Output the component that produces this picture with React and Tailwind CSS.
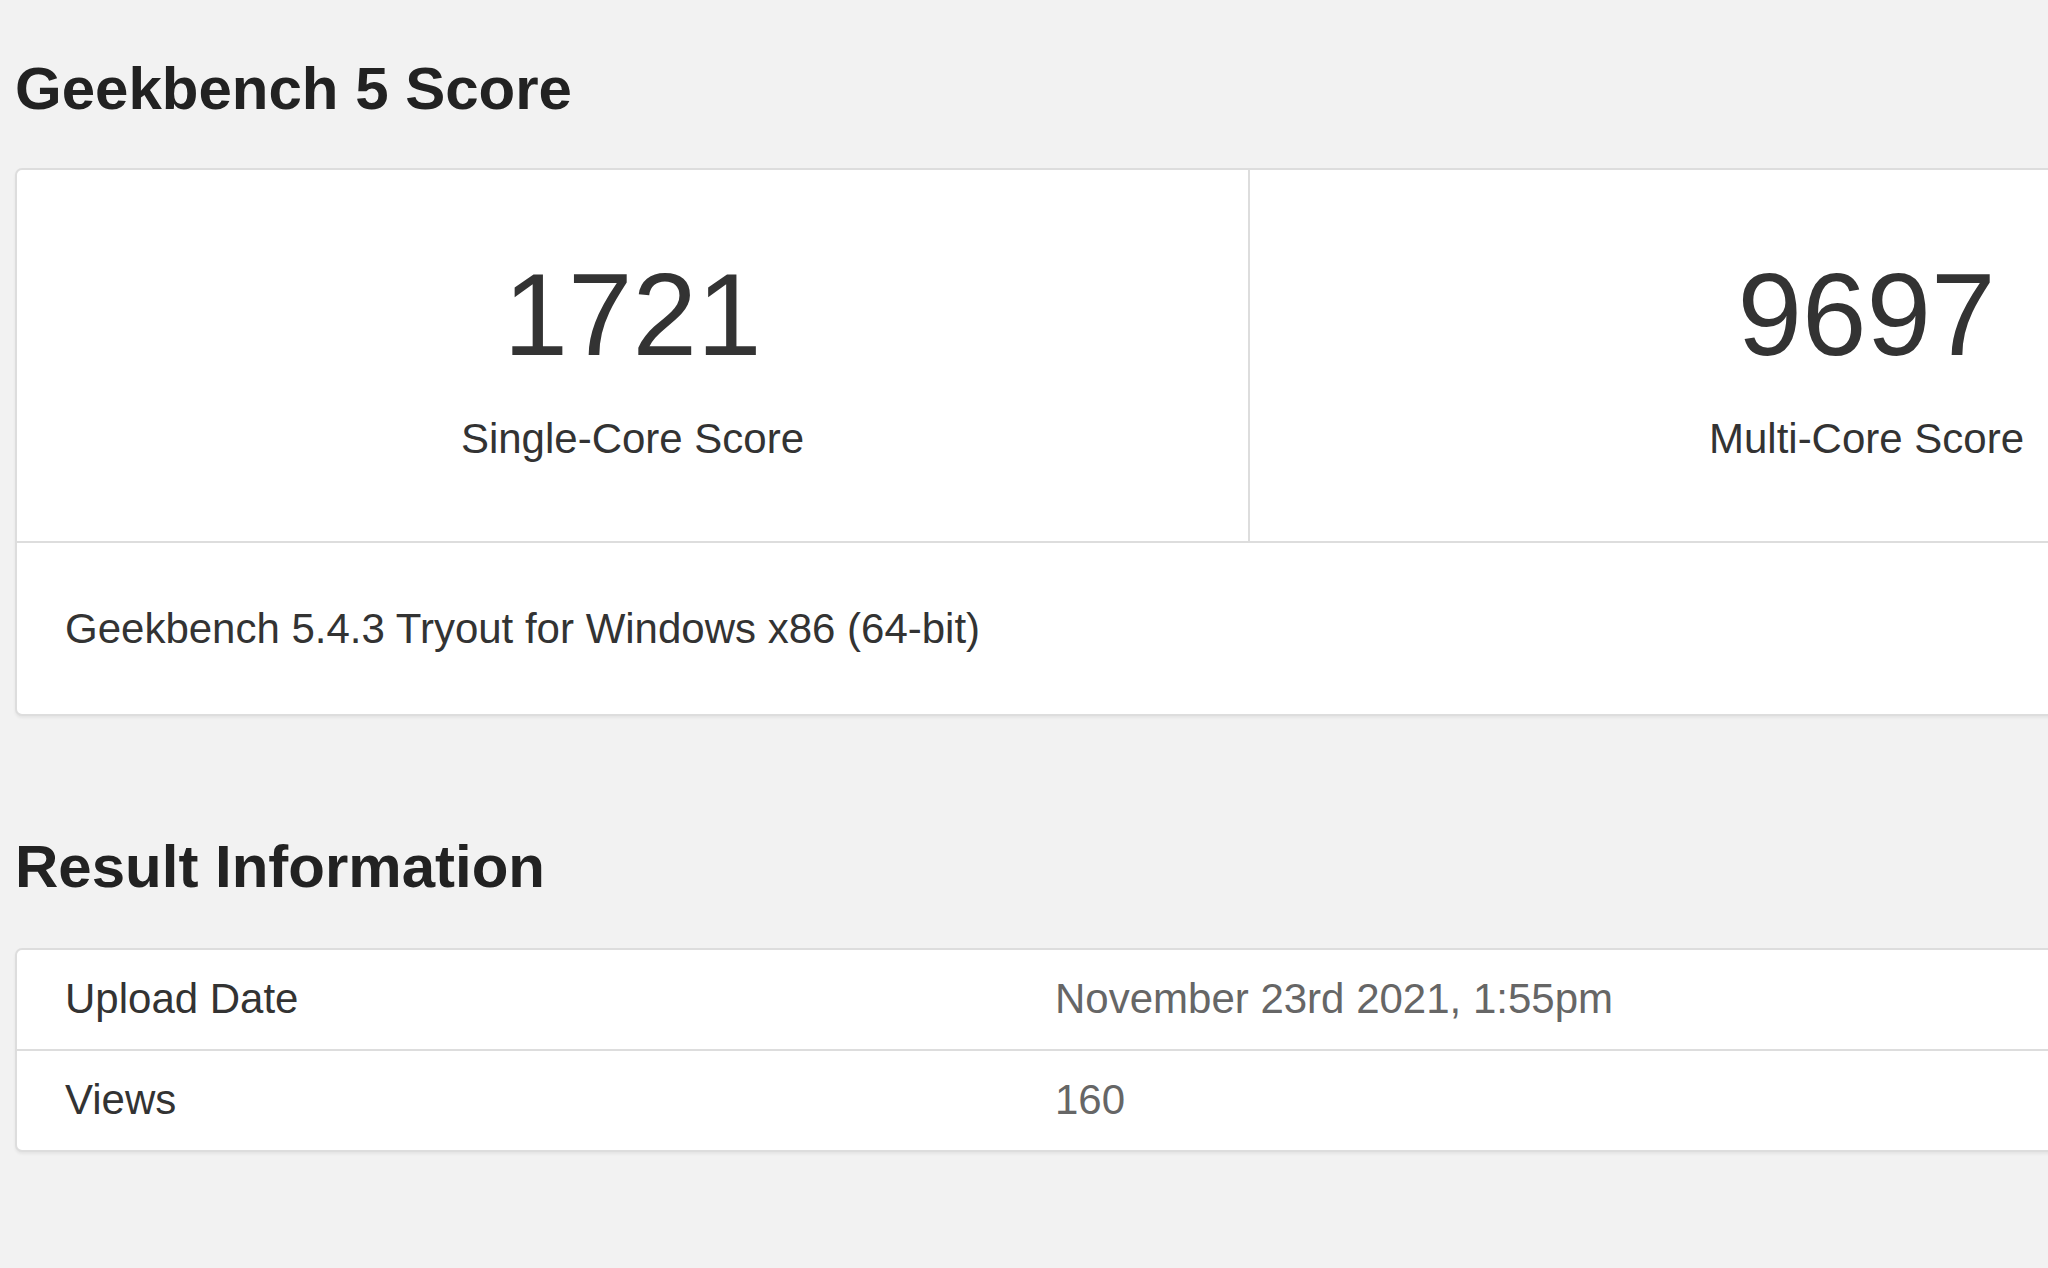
import React from "react";

const scores = [
  { value: 1721, label: "Single-Core Score" },
  { value: 9697, label: "Multi-Core Score" },
];

const info = [
  { label: "Upload Date", value: "November 23rd 2021, 1:55pm" },
  { label: "Views", value: "160" },
];

export default function App() {
  return (
    <div className="w-[2048px] h-[1268px] overflow-hidden bg-[#f2f2f2] pl-[15px] pt-[56px] font-['Liberation_Sans',Arial,sans-serif] text-[#333]">
      <h2 className="text-[60px] leading-[66px] font-bold text-[#222]">Geekbench 5 Score</h2>

      <div className="mt-[46px] w-[2470px] bg-white border-2 border-[#dddddd] rounded-[7px] shadow-[0_2px_3px_rgba(0,0,0,0.06)]">
        <div className="grid grid-cols-2 border-b-2 border-[#dddddd]">
          {scores.map((s, i) => (
            <div
              key={s.label}
              className={`text-center pt-[85px] pb-[77px] ${i === 0 ? "border-r-2 border-[#dddddd]" : ""}`}
            >
              <div className="text-[116px] leading-[120px] text-[#333]">{s.value}</div>
              <div className="mt-[39px] text-[42px] leading-[50px] text-[#333]">{s.label}</div>
            </div>
          ))}
        </div>
        <div className="pl-[48px] pt-[61px] pb-[60px] text-[42px] leading-[50px] text-[#333]">
          Geekbench 5.4.3 Tryout for Windows x86 (64-bit)
        </div>
      </div>

      <h2 className="mt-[118px] text-[60px] leading-[66px] font-bold text-[#222]">Result Information</h2>

      <div className="mt-[48px] w-[2470px] bg-white border-2 border-[#dddddd] rounded-[7px] shadow-[0_2px_3px_rgba(0,0,0,0.06)]">
        {info.map((row, i) => (
          <div
            key={row.label}
            className={`grid grid-cols-[990px_1fr] text-[42px] leading-[50px] ${i > 0 ? "border-t-2 border-[#dddddd]" : ""}`}
          >
            <div className="pl-[48px] pt-[24px] pb-[25px] text-[#333]">{row.label}</div>
            <div className="pl-[48px] pt-[24px] pb-[25px] text-[#666]">{row.value}</div>
          </div>
        ))}
      </div>
    </div>
  );
}
